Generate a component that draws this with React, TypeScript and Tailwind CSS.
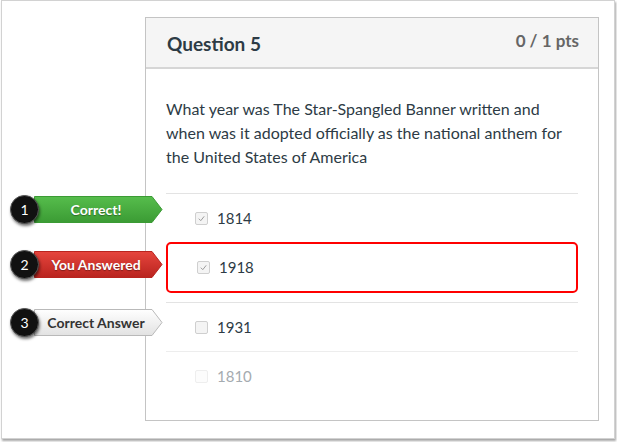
const font = { fontFamily: "Lato, 'Noto Sans', sans-serif" };

function Check({ checked, faint }: { checked?: boolean; faint?: boolean }) {
  return (
    <span
      className={`flex h-[13px] w-[13px] items-center justify-center rounded-[2px] border ${
        faint ? "border-[#eeeeee] bg-[#fcfcfc]" : "border-[#cfcfcf] bg-[#f4f4f4]"
      }`}
    >
      {checked && (
        <svg width="9" height="9" viewBox="0 0 10 10">
          <path d="M2 5.2 L4.2 7.4 L8 2.6" fill="none" stroke="#9a9a9a" strokeWidth="1.1" />
        </svg>
      )}
    </span>
  );
}

function Callout({
  n,
  top,
  label,
  tone,
}: {
  n: number;
  top: number;
  label: string;
  tone: "green" | "red" | "gray";
}) {
  const fills = {
    green: ["#56bd4c", "#3b9b34", "#3b9b34"],
    red: ["#e6453d", "#b9241f", "#b9241f"],
    gray: ["#ffffff", "#e2e2e2", "#b9b9b9"],
  }[tone];
  const id = `g-${tone}`;
  return (
    <div className="absolute left-[8px] flex items-center" style={{ top }}>
      <div className="relative h-[29px] w-[156px]">
        <svg className="absolute left-[24px] top-[1px]" width="130" height="27" viewBox="0 0 130 27">
          <defs>
            <linearGradient id={id} x1="0" y1="0" x2="0" y2="1">
              <stop offset="0" stopColor={fills[0]} />
              <stop offset="1" stopColor={fills[1]} />
            </linearGradient>
          </defs>
          <path
            d="M0.5 0.5 H118 L128 13.5 L118 26.5 H0.5 Z"
            fill={`url(#${id})`}
            stroke={fills[2]}
            strokeWidth="1"
          />
        </svg>
        <span
          className={`absolute left-[30px] top-[1px] flex h-[27px] w-[112px] items-center justify-center text-[14px] font-bold ${
            tone === "gray" ? "text-[#333333]" : "text-white [text-shadow:0_1px_1px_rgba(0,0,0,0.35)]"
          }`}
        >
          {label}
        </span>
        <span className="absolute left-0 top-0 flex h-[29px] w-[29px] items-center justify-center rounded-full border border-[#555] bg-[#111111] text-[14px] text-white shadow-[1px_2px_3px_rgba(0,0,0,0.55)]">
          {n}
        </span>
      </div>
    </div>
  );
}

export default function App() {
  return (
    <div className="h-[442px] w-[617px] bg-white" style={font}>
      <div className="relative ml-[1px] h-[439px] w-[614px] border border-[#d2d2d2] bg-white shadow-[1px_2px_2px_rgba(0,0,0,0.35)]">
        <div className="ml-[143px] mt-[16px] h-[404px] w-[454px] border border-[#c4c4c4] bg-white">
          <div className="flex h-[51px] items-center justify-between border-b-2 border-[#d6d6d6] bg-[#f5f5f5] pl-[21px] pr-[19px]">
            <span className="mt-[3px] text-[19px] font-bold text-[#2d3b45]">Question 5</span>
            <span className="mb-[4px] text-[17px] font-bold text-[#666666]">0 / 1 pts</span>
          </div>
          <div className="px-[20px]">
            <p className="pt-[28px] text-[16px] leading-[24px] text-[#2d3b45]">
              What year was The Star-Spangled Banner written and when was it adopted officially as the national anthem for
              the United States of America
            </p>
            <div className="mt-[24px] flex flex-col text-[15px] text-[#2d3b45]">
              <div className="flex h-[49px] items-center gap-[9px] border-t border-[#e3e3e3] pl-[29px]">
                <Check checked />
                <span>1814</span>
              </div>
              <div className="flex h-[51px] items-center gap-[9px] rounded-[5px] border-2 border-[#ff0000] pl-[29px]">
                <Check checked />
                <span>1918</span>
              </div>
              <div className="mt-[9px] flex h-[49px] items-center gap-[9px] border-t border-[#e3e3e3] pl-[29px]">
                <Check />
                <span>1931</span>
              </div>
              <div className="flex h-[49px] items-center gap-[9px] border-t border-[#ededed] pl-[29px] text-[#a5abb0]">
                <Check faint />
                <span>1810</span>
              </div>
            </div>
          </div>
        </div>
        <Callout n={1} top={194} label="Correct!" tone="green" />
        <Callout n={2} top={249} label="You Answered" tone="red" />
        <Callout n={3} top={307} label="Correct Answer" tone="gray" />
      </div>
    </div>
  );
}
